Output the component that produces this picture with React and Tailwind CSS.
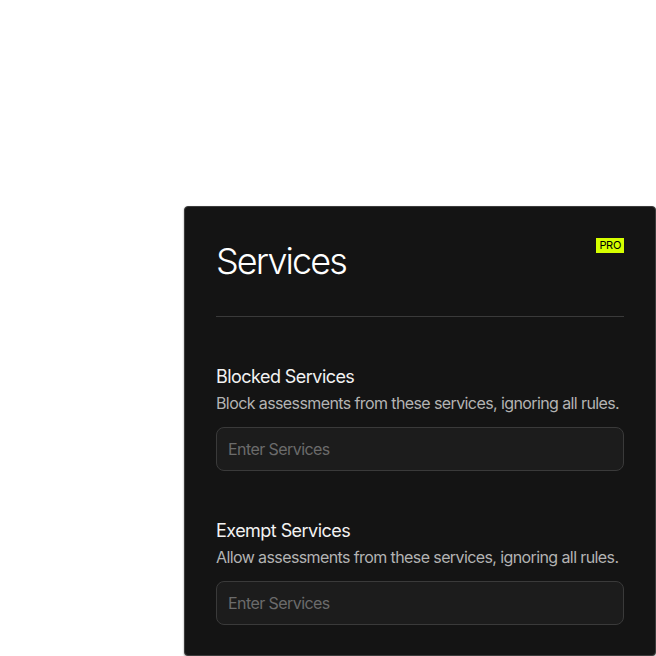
export default function App() {
  return (
    <div className="min-h-[656px] w-[656px] bg-white pt-[206px] pl-[184px]" style={{ fontFamily: 'Inter, "Noto Sans", sans-serif' }}>
      <div className="w-[472px] h-[450px] rounded-[4px] border border-[#3c3c3c] bg-[#141414] px-[31px] pt-[33px] pb-[29px] shadow-[0_1px_2px_rgba(0,0,0,0.4)]">
        <div className="flex items-start justify-between">
          <h1 className="mt-[1px] text-[36px] leading-[40px] font-light tracking-[-1.9px] text-white">Services</h1>
          <span className="mt-[-2px] bg-[#d6ff00] px-[3px] text-[11px] leading-[15px] font-normal tracking-[-0.3px] text-black">PRO</span>
        </div>
        <div className="mt-[35px] h-px bg-[#3a3a3a]" />
        <div className="mt-[46px]">
          <div className="text-[18px] leading-[28px] tracking-[-0.55px] text-[#f2f2f2]">Blocked Services</div>
          <div className="text-[16px] leading-[24px] tracking-[-0.6px] text-[#b3b3b3]">Block assessments from these services, ignoring all rules.</div>
          <input
            className="mt-3 block h-[44px] w-full rounded-lg border border-[#3a3a3a] bg-[#1c1c1c] px-[11px] text-[16px] tracking-[-0.57px] text-white placeholder:text-[#6b6b6b] outline-none"
            placeholder="Enter Services"
          />
        </div>
        <div className="mt-[46px]">
          <div className="text-[18px] leading-[28px] tracking-[-0.55px] text-[#f2f2f2]">Exempt Services</div>
          <div className="text-[16px] leading-[24px] tracking-[-0.6px] text-[#b3b3b3]">Allow assessments from these services, ignoring all rules.</div>
          <input
            className="mt-3 block h-[44px] w-full rounded-lg border border-[#3a3a3a] bg-[#1c1c1c] px-[11px] text-[16px] tracking-[-0.57px] text-white placeholder:text-[#6b6b6b] outline-none"
            placeholder="Enter Services"
          />
        </div>
      </div>
    </div>
  );
}
